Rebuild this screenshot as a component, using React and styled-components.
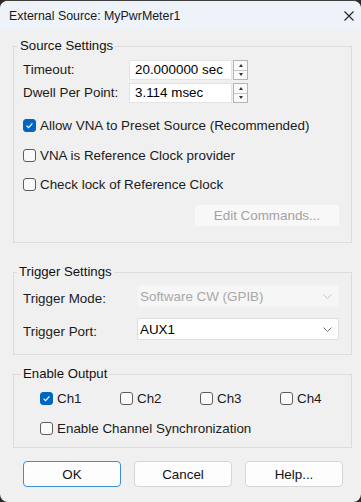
import React from "react";
import styled, { createGlobalStyle } from "styled-components";

const Global = createGlobalStyle`
  html, body { margin: 0; padding: 0; background: #2b2b2b; }
  body { font-family: "Liberation Sans", Arial, sans-serif; }
  * { box-sizing: border-box; }
`;

const FS = "13.4px";

const Window = styled.div`
  width: 361px;
  height: 502px;
  background: #f0f0f0;
  border-radius: 8px;
  overflow: hidden;
  border-top: 1px solid #3e3e3e;
  display: flex;
  flex-direction: column;
  color: #1b1b1b;
`;

const TitleBar = styled.div`
  height: 29px;
  flex: none;
  background: #edf3f8;
  display: flex;
  align-items: center;
  justify-content: space-between;
  padding: 0 6px 0 9px;
  font-size: 12.4px;
  color: #1a1a1a;
`;

const Body = styled.div`
  padding: 8px 9px 0 13px;
  display: flex;
  flex-direction: column;
`;

const Group = styled.fieldset`
  margin: 0 0 ${(p) => p.$gap || 0}px 0;
  padding: 0;
  border: 1px solid #dcdcdc;
  min-width: 0;
`;

const Legend = styled.legend`
  font-size: 13.2px;
  line-height: 16px;
  padding: 0 2px;
  margin-left: ${(p) => p.$indent}px;
  color: #111;
`;

const Inner = styled.div`
  padding: ${(p) => p.$pad};
  display: flex;
  flex-direction: column;
`;

const FieldRow = styled.div`
  display: flex;
  align-items: ${(p) => (p.$bottom ? "flex-end" : "center")};
  margin-top: ${(p) => p.$mt || 0}px;
`;

const Label = styled.span`
  width: ${(p) => p.$w}px;
  flex: none;
  font-size: ${FS};
  line-height: 16px;
`;

const NumInput = styled.div`
  width: 103px;
  height: 20px;
  background: #fff;
  border: 1px solid #e4e4e4;
  font-size: ${FS};
  line-height: 18px;
  padding-left: 5px;
  color: #000;
`;

const Spinner = styled.div`
  width: 15px;
  height: 20px;
  margin-left: 1px;
  display: flex;
  flex-direction: column;
  border: 1px solid #b4b4b4;
  background: #fafafa;
`;

const SpinHalf = styled.div`
  flex: 1;
  display: flex;
  align-items: center;
  justify-content: center;
  & + & { border-top: 1px solid #c8c8c8; }
`;

const Tri = styled.span`
  width: 0;
  height: 0;
  border-left: 2.5px solid transparent;
  border-right: 2.5px solid transparent;
  ${(p) => (p.$down ? "border-top: 3px solid #333;" : "border-bottom: 3px solid #333;")}
`;

const CheckRow = styled.label`
  display: flex;
  align-items: center;
  height: 20px;
  gap: 4px;
  font-size: ${FS};
  margin-top: ${(p) => p.$mt || 0}px;
  width: ${(p) => (p.$w ? `${p.$w}px` : "auto")};
`;

const Box = styled.span`
  width: 13px;
  height: 13px;
  flex: none;
  border-radius: 3px;
  border: 1px solid ${(p) => (p.$on ? "#0067c0" : "#5d5d5d")};
  background: ${(p) => (p.$on ? "#0067c0" : "#fafafa")};
  display: flex;
  align-items: center;
  justify-content: center;
`;

const ChannelRow = styled.div`
  display: flex;
`;

const EditButton = styled.div`
  align-self: flex-end;
  width: 146px;
  height: 23px;
  margin-top: 10px;
  background: #f8f8f8;
  border: 1px solid #f1f1f1;
  border-radius: 3px;
  color: #a2a2a2;
  font-size: ${FS};
  display: flex;
  align-items: center;
  justify-content: center;
`;

const Select = styled.div`
  width: 202px;
  height: 22px;
  background: ${(p) => (p.$disabled ? "#f6f6f6" : "#ffffff")};
  border: 1px solid ${(p) => (p.$disabled ? "#f3f3f3" : "#dedede")};
  border-radius: 2px;
  color: ${(p) => (p.$disabled ? "#a8a8a8" : "#000")};
  font-size: ${FS};
  display: flex;
  align-items: center;
  justify-content: space-between;
  padding: 0 6px 0 2px;
`;

const ButtonBar = styled.div`
  display: flex;
  gap: 13px;
  padding-left: 10px;
  margin-top: 13px;
`;

const Button = styled.div`
  width: ${(p) => p.$w}px;
  height: 26px;
  background: #fdfdfd;
  border: 1px solid ${(p) => (p.$default ? "#3b8fd9" : "#d6d6d6")};
  border-radius: 4px;
  font-size: ${FS};
  display: flex;
  align-items: center;
  justify-content: center;
  color: #111;
`;

function Check({ on, children, mt, w }) {
  return (
    <CheckRow $mt={mt} $w={w}>
      <Box $on={on}>
        {on && (
          <svg width="9" height="9" viewBox="0 0 9 9">
            <path d="M1.6 4.8 L3.6 6.6 L7.4 2.4" fill="none" stroke="#fff" strokeWidth="1.2" />
          </svg>
        )}
      </Box>
      {children}
    </CheckRow>
  );
}

function Spin() {
  return (
    <Spinner>
      <SpinHalf><Tri /></SpinHalf>
      <SpinHalf><Tri $down /></SpinHalf>
    </Spinner>
  );
}

function Chevron({ color }) {
  return (
    <svg width="9" height="5" viewBox="0 0 9 5">
      <path d="M0.5 0.5 L4.5 4.5 L8.5 0.5" fill="none" stroke={color} strokeWidth="1" />
    </svg>
  );
}

export default function App() {
  return (
    <>
      <Global />
      <Window>
        <TitleBar>
          <span>External Source: MyPwrMeter1</span>
          <svg width="12" height="12" viewBox="0 0 12 12">
            <path d="M1.5 1.5 L10.5 10.5 M10.5 1.5 L1.5 10.5" stroke="#222" strokeWidth="1.1" />
          </svg>
        </TitleBar>
        <Body>
          <Group $gap={21}>
            <Legend $indent={4}>Source Settings</Legend>
            <Inner $pad="6px 11px 15px 9px">
              <FieldRow>
                <Label $w={106}>Timeout:</Label>
                <NumInput>20.000000 sec</NumInput>
                <Spin />
              </FieldRow>
              <FieldRow $mt={3}>
                <Label $w={106}>Dwell Per Point:</Label>
                <NumInput>3.114 msec</NumInput>
                <Spin />
              </FieldRow>
              <Check on mt={12}>Allow VNA to Preset Source (Recommended)</Check>
              <Check mt={10}>VNA is Reference Clock provider</Check>
              <Check mt={9}>Check lock of Reference Clock</Check>
              <EditButton>Edit Commands...</EditButton>
            </Inner>
          </Group>
          <Group $gap={11}>
            <Legend $indent={3}>Trigger Settings</Legend>
            <Inner $pad="5px 12px 14px 9px">
              <FieldRow $bottom>
                <Label $w={114}>Trigger Mode:</Label>
                <Select $disabled>
                  <span>Software CW (GPIB)</span>
                  <Chevron color="#c4c4c4" />
                </Select>
              </FieldRow>
              <FieldRow $bottom $mt={11}>
                <Label $w={114}>Trigger Port:</Label>
                <Select>
                  <span>AUX1</span>
                  <Chevron color="#777" />
                </Select>
              </FieldRow>
            </Inner>
          </Group>
          <Group>
            <Legend $indent={7}>Enable Output</Legend>
            <Inner $pad="6px 11px 9px 26px">
              <ChannelRow>
                <Check on w={80}>Ch1</Check>
                <Check w={80}>Ch2</Check>
                <Check w={80}>Ch3</Check>
                <Check w={60}>Ch4</Check>
              </ChannelRow>
              <Check mt={10}>Enable Channel Synchronization</Check>
            </Inner>
          </Group>
          <ButtonBar>
            <Button $w={98} $default>OK</Button>
            <Button $w={98}>Cancel</Button>
            <Button $w={98}>Help...</Button>
          </ButtonBar>
        </Body>
      </Window>
    </>
  );
}
